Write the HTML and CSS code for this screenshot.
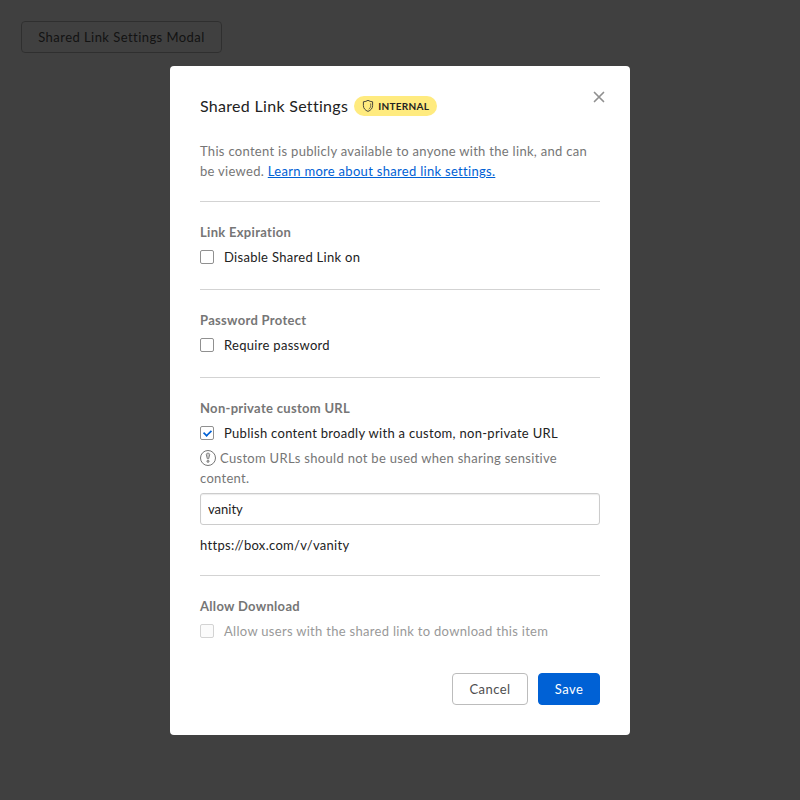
FILE: index.html
```html
<!DOCTYPE html>
<html lang="en">
<head>
<meta charset="utf-8">
<title>Shared Link Settings</title>
<link rel="stylesheet" href="styles.css">
</head>
<body>
<div class="page"><button class="btn launch">Shared Link Settings Modal</button></div>
<div class="backdrop">
  <div class="modal" role="dialog" aria-label="Shared Link Settings">
    <header class="modal-header">
      <h2 class="modal-title">Shared Link Settings</h2>
      <span class="badge">
        <svg class="badge-icon" viewBox="0 0 12 14" aria-hidden="true"><path d="M6 1.3 C7.3 2.2 8.8 2.7 10.6 2.8 V6.6 C10.6 9.4 8.8 11.3 6 12.4 C3.2 11.3 1.4 9.4 1.4 6.6 V2.8 C3.2 2.7 4.7 2.2 6 1.3 Z" fill="none" stroke="#333" stroke-width=".9" stroke-linejoin="round"/><path d="M8.7 4.4 V6.6 C8.7 8.3 8 9.3 6.7 10.2" fill="none" stroke="#333" stroke-width=".7"/></svg>
        <span>INTERNAL</span>
      </span>
      <button class="close" aria-label="Close"><svg viewBox="0 0 12 12"><path d="M1.5 1.5 L10.5 10.5 M10.5 1.5 L1.5 10.5" stroke="#909090" stroke-width="1.7" stroke-linecap="round"/></svg></button>
    </header>
    <p class="intro">This content is publicly available to anyone with the link, and can be viewed. <a class="link" href="#">Learn more about shared link settings.</a></p>
    <section class="section">
      <h3 class="legend">Link Expiration</h3>
      <label class="check"><input class="box" type="checkbox">Disable Shared Link on</label>
    </section>
    <section class="section">
      <h3 class="legend">Password Protect</h3>
      <label class="check"><input class="box" type="checkbox">Require password</label>
    </section>
    <section class="section section-url">
      <h3 class="legend">Non-private custom URL</h3>
      <label class="check"><input class="box" type="checkbox" checked>Publish content broadly with a custom, non-private URL</label>
      <p class="warning"><svg class="warning-icon" viewBox="0 0 16 16" aria-hidden="true"><circle cx="8" cy="8" r="7.5" fill="none" stroke="#767676"/><path d="M6.3 4.7 C6.3 3.6 7 3.2 8 3.2 S9.7 3.6 9.7 4.7 L8.7 8.7 H7.3 Z" fill="#ccc" stroke="#767676" stroke-width=".9"/><circle cx="8" cy="11.3" r="1.1" fill="#aaa" stroke="#767676" stroke-width=".8"/></svg> Custom URLs should not be used when sharing sensitive content.</p>
      <input class="field" type="text" value="vanity" aria-label="Custom URL">
      <p class="preview">https://box.com/v/vanity</p>
    </section>
    <section class="section section-last">
      <h3 class="legend">Allow Download</h3>
      <label class="check check-disabled"><input class="box" type="checkbox" disabled>Allow users with the shared link to download this item</label>
    </section>
    <footer class="actions">
      <button class="btn btn-cancel">Cancel</button>
      <button class="btn btn-primary">Save</button>
    </footer>
  </div>
</div>
</body>
</html>
```
FILE: styles.css
```css
* { box-sizing: border-box; }
body {
  margin: 0;
  background: #fff;
  color: #222;
  font: 13px/20px Lato, "Liberation Sans", sans-serif;
  letter-spacing: .3px;
}
h2, h3, p { margin: 0; }
.page { padding: 21px; }
.btn {
  height: 32px;
  padding: 0;
  border: 1px solid #bcbcbc;
  border-radius: 4px;
  background: #fff;
  color: #4e4e4e;
  font: inherit;
  letter-spacing: .45px;
}
.launch { display: block; width: 201px; }
.btn-cancel { width: 76px; }
.btn-primary {
  width: 62px;
  border-color: #0061d5;
  background: #0061d5;
  color: #fff;
}
.backdrop {
  position: fixed;
  inset: 0;
  padding-top: 66px;
  background: rgba(0, 0, 0, .75);
}
.modal {
  width: 460px;
  height: 669px;
  margin: 0 auto;
  padding: 30px;
  border-radius: 4px;
  background: #fff;
}
.modal-header {
  display: flex;
  align-items: center;
  height: 20px;
  margin-bottom: 25px;
}
.modal-title {
  font-size: 16px;
  font-weight: 400;
  line-height: 20px;
}
.badge {
  display: flex;
  align-items: center;
  height: 20px;
  margin-left: 6px;
  padding: 0 8px;
  border-radius: 10px;
  background: #ffeb7f;
  font-size: 10px;
  font-weight: 700;
  letter-spacing: .3px;
}
.badge-icon { width: 12px; height: 14px; margin-right: 4px; }
.close {
  align-self: flex-start;
  width: 12px;
  height: 12px;
  margin: -5px -5px 0 auto;
  padding: 0;
  border: 0;
  background: none;
}
.close svg { display: block; width: 12px; height: 12px; }
.intro {
  padding-bottom: 20px;
  border-bottom: 1px solid #d3d3d3;
  color: #767676;
}
.link { color: #0061d5; text-decoration: underline; }
.section {
  height: 88px;
  padding-top: 20px;
  border-bottom: 1px solid #d3d3d3;
}
.section-url { height: 198px; }
.section-last { height: 97px; border: 0; }
.legend {
  margin-bottom: 5px;
  color: #767676;
  font-size: 13px;
  font-weight: 700;
  line-height: 20px;
}
.check { display: flex; align-items: center; height: 20px; }
.check-disabled { color: #999; }
.box {
  appearance: none;
  display: grid;
  place-items: center;
  width: 14px;
  height: 14px;
  margin: 0 10px 0 0;
  border: 1px solid #909090;
  border-radius: 2px;
  background: #fff;
}
.box:checked::before {
  content: "";
  width: 7px;
  height: 4px;
  border: solid #0061d5;
  border-width: 0 0 2px 2px;
  transform: translateY(-.7px) rotate(-45deg) scale(.86);
}
.box:disabled { border-color: #d3d3d3; background: #fbfbfb; }
.warning { margin-top: 5px; color: #767676; }
.warning-icon { width: 16px; height: 16px; margin-right: .4px; vertical-align: -3px; }
.field {
  display: block;
  width: 400px;
  height: 32px;
  margin: 5px 0 10px;
  padding: 0 7px;
  border: 1px solid #ccc;
  border-radius: 3px;
  box-shadow: inset 0 1px 1px rgba(0, 0, 0, .08);
  color: #222;
  font: inherit;
  letter-spacing: 0;
}
.actions { display: flex; justify-content: flex-end; gap: 10px; }
```
